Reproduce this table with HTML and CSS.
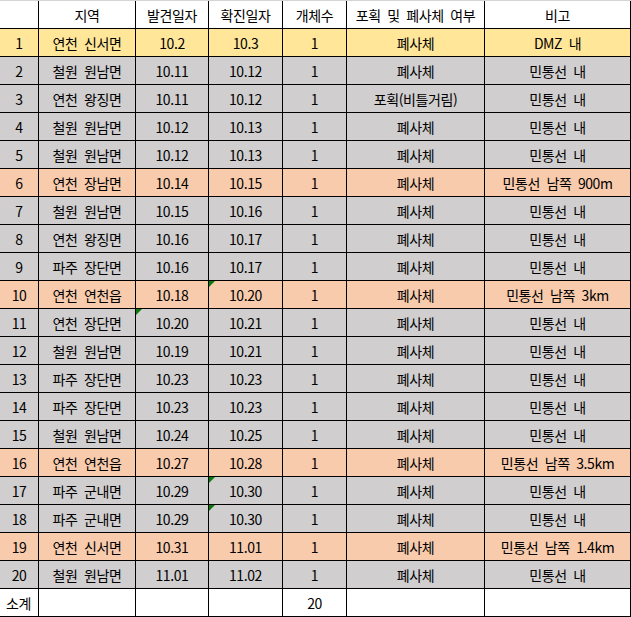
FILE: index.html
```html
<!DOCTYPE html>
<html lang="ko">
<head>
<meta charset="utf-8">
<title>ASF 폐사체 현황</title>
<link rel="stylesheet" href="styles.css">
</head>
<body>
<div class="sheet">
  <div class="row head">
    <div class="cell"></div><div class="cell">지역</div><div class="cell">발견일자</div><div class="cell">확진일자</div><div class="cell">개체수</div><div class="cell">포획 및 폐사체 여부</div><div class="cell">비고</div>
  </div>
  <div class="row yellow">
    <div class="cell">1</div><div class="cell">연천 신서면</div><div class="cell">10.2</div><div class="cell">10.3</div><div class="cell">1</div><div class="cell">폐사체</div><div class="cell">DMZ 내</div>
  </div>
  <div class="row gray">
    <div class="cell">2</div><div class="cell">철원 원남면</div><div class="cell">10.11</div><div class="cell">10.12</div><div class="cell">1</div><div class="cell">폐사체</div><div class="cell">민통선 내</div>
  </div>
  <div class="row gray">
    <div class="cell">3</div><div class="cell">연천 왕징면</div><div class="cell">10.11</div><div class="cell">10.12</div><div class="cell">1</div><div class="cell">포획(비틀거림)</div><div class="cell">민통선 내</div>
  </div>
  <div class="row gray">
    <div class="cell">4</div><div class="cell">철원 원남면</div><div class="cell">10.12</div><div class="cell">10.13</div><div class="cell">1</div><div class="cell">폐사체</div><div class="cell">민통선 내</div>
  </div>
  <div class="row gray">
    <div class="cell">5</div><div class="cell">철원 원남면</div><div class="cell">10.12</div><div class="cell">10.13</div><div class="cell">1</div><div class="cell">폐사체</div><div class="cell">민통선 내</div>
  </div>
  <div class="row orange">
    <div class="cell">6</div><div class="cell">연천 장남면</div><div class="cell">10.14</div><div class="cell">10.15</div><div class="cell">1</div><div class="cell">폐사체</div><div class="cell">민통선 남쪽 900m</div>
  </div>
  <div class="row gray">
    <div class="cell">7</div><div class="cell">철원 원남면</div><div class="cell">10.15</div><div class="cell">10.16</div><div class="cell">1</div><div class="cell">폐사체</div><div class="cell">민통선 내</div>
  </div>
  <div class="row gray">
    <div class="cell">8</div><div class="cell">연천 왕징면</div><div class="cell">10.16</div><div class="cell">10.17</div><div class="cell">1</div><div class="cell">폐사체</div><div class="cell">민통선 내</div>
  </div>
  <div class="row gray">
    <div class="cell">9</div><div class="cell">파주 장단면</div><div class="cell">10.16</div><div class="cell">10.17</div><div class="cell">1</div><div class="cell">폐사체</div><div class="cell">민통선 내</div>
  </div>
  <div class="row orange">
    <div class="cell">10</div><div class="cell">연천 연천읍</div><div class="cell">10.18</div><div class="cell flag">10.20</div><div class="cell">1</div><div class="cell">폐사체</div><div class="cell">민통선 남쪽 3km</div>
  </div>
  <div class="row gray">
    <div class="cell">11</div><div class="cell">연천 장단면</div><div class="cell flag">10.20</div><div class="cell">10.21</div><div class="cell">1</div><div class="cell">폐사체</div><div class="cell">민통선 내</div>
  </div>
  <div class="row gray">
    <div class="cell">12</div><div class="cell">철원 원남면</div><div class="cell">10.19</div><div class="cell">10.21</div><div class="cell">1</div><div class="cell">폐사체</div><div class="cell">민통선 내</div>
  </div>
  <div class="row gray">
    <div class="cell">13</div><div class="cell">파주 장단면</div><div class="cell">10.23</div><div class="cell">10.23</div><div class="cell">1</div><div class="cell">폐사체</div><div class="cell">민통선 내</div>
  </div>
  <div class="row gray">
    <div class="cell">14</div><div class="cell">파주 장단면</div><div class="cell">10.23</div><div class="cell">10.23</div><div class="cell">1</div><div class="cell">폐사체</div><div class="cell">민통선 내</div>
  </div>
  <div class="row gray">
    <div class="cell">15</div><div class="cell">철원 원남면</div><div class="cell">10.24</div><div class="cell">10.25</div><div class="cell">1</div><div class="cell">폐사체</div><div class="cell">민통선 내</div>
  </div>
  <div class="row orange">
    <div class="cell">16</div><div class="cell">연천 연천읍</div><div class="cell">10.27</div><div class="cell">10.28</div><div class="cell">1</div><div class="cell">폐사체</div><div class="cell">민통선 남쪽 3.5km</div>
  </div>
  <div class="row gray">
    <div class="cell">17</div><div class="cell">파주 군내면</div><div class="cell">10.29</div><div class="cell flag">10.30</div><div class="cell">1</div><div class="cell">폐사체</div><div class="cell">민통선 내</div>
  </div>
  <div class="row gray">
    <div class="cell">18</div><div class="cell">파주 군내면</div><div class="cell">10.29</div><div class="cell flag">10.30</div><div class="cell">1</div><div class="cell">폐사체</div><div class="cell">민통선 내</div>
  </div>
  <div class="row orange">
    <div class="cell">19</div><div class="cell">연천 신서면</div><div class="cell">10.31</div><div class="cell">11.01</div><div class="cell">1</div><div class="cell">폐사체</div><div class="cell">민통선 남쪽 1.4km</div>
  </div>
  <div class="row gray">
    <div class="cell">20</div><div class="cell">철원 원남면</div><div class="cell">11.01</div><div class="cell">11.02</div><div class="cell">1</div><div class="cell">폐사체</div><div class="cell">민통선 내</div>
  </div>
  <div class="row total">
    <div class="cell label">소계</div><div class="cell"></div><div class="cell"></div><div class="cell"></div><div class="cell">20</div><div class="cell"></div><div class="cell"></div>
  </div>
</div>
</body>
</html>
```
FILE: styles.css
```css
html, body {
  margin: 0;
  padding: 0;
  background: #ffffff;
}

body {
  font-family: "Noto Sans CJK KR", "Noto Sans", sans-serif;
  font-size: 14px;
  color: #000000;
}

.sheet {
  width: 631px;
  border-top: 1px solid #d4d4d4;
}

.row {
  display: grid;
  grid-template-columns: 39px 97px 73px 74px 64px 138px 146px;
  height: 28px;
}

.cell {
  box-sizing: border-box;
  height: 28px;
  border-right: 1px solid #000000;
  border-bottom: 1px solid #000000;
  display: flex;
  align-items: center;
  justify-content: center;
  white-space: nowrap;
  line-height: 1;
  letter-spacing: -0.4px;
  word-spacing: 3px;
  padding-top: 1px;
  position: relative;
}

.head .cell { background: #ffffff; }
.yellow .cell { background: #ffe699; }
.gray .cell { background: #d0cece; }
.orange .cell { background: #f8cbad; }
.total .cell { background: #ffffff; }

.total .label {
  justify-content: flex-start;
  padding-left: 6px;
}

.flag::before {
  content: "";
  position: absolute;
  left: 0;
  top: 0;
  width: 0;
  height: 0;
  border-top: 6px solid #0b7a0b;
  border-right: 6px solid transparent;
}
```
